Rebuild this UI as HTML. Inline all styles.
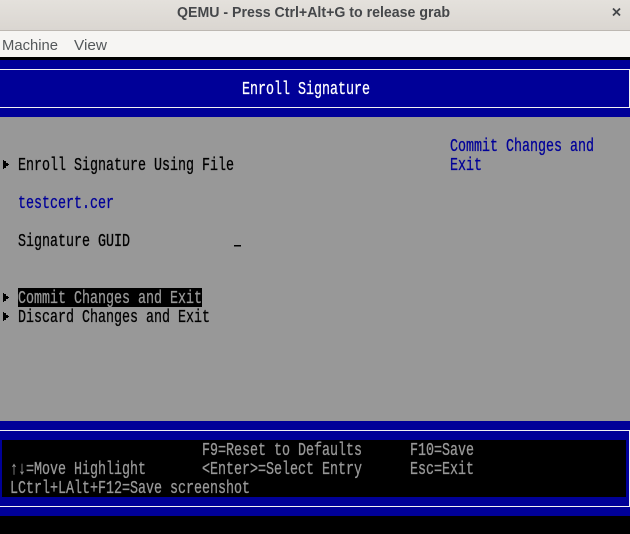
<!DOCTYPE html>
<html>
<head>
<meta charset="utf-8">
<style>
html,body{margin:0;padding:0;background:#000;width:630px;height:534px;overflow:hidden}
svg{display:block}
.m{font-family:"Liberation Mono",monospace;font-size:18px;stroke-width:.3px;paint-order:stroke}
.t{font-family:"Liberation Sans",sans-serif;font-size:14.5px;font-weight:700;fill:#45474a}
.u{font-family:"Liberation Sans",sans-serif;font-size:14.5px;fill:#54585a}
</style>
</head>
<body>
<svg width="630" height="534" viewBox="0 0 630 534" xmlns="http://www.w3.org/2000/svg">
<defs>
<linearGradient id="g" x1="0" y1="0" x2="0" y2="1"><stop offset="0" stop-color="#e4e1dc"/><stop offset="1" stop-color="#dad6d1"/></linearGradient>
<path id="a" d="M3 0h1v1h2v2h2v1h1v1h-1v1h-2v2h-2v1h-1z"/>
</defs>
<rect width="630" height="534" fill="#000"/>
<rect width="630" height="30" fill="url(#g)"/>
<rect y="30" width="630" height="1" fill="#bdb8b2"/>
<rect y="31" width="630" height="26" fill="#f6f5f3"/>
<rect y="57" width="630" height="3" fill="#000"/>
<text class="t" x="177" y="17" textLength="273" lengthAdjust="spacingAndGlyphs">QEMU - Press Ctrl+Alt+G to release grab</text>
<path d="M613 8.500l7 7M620 8.500l-7 7" stroke="#45474a" stroke-width="1.800" fill="none"/>
<text class="u" x="2" y="50" textLength="56" lengthAdjust="spacingAndGlyphs">Machine</text>
<text class="u" x="74" y="50" textLength="33" lengthAdjust="spacingAndGlyphs">View</text>

<rect y="60" width="630" height="57" fill="#000098"/>
<path d="M0 69.500H629.500V107.500H0" fill="none" stroke="#f2f2f2" stroke-width="1"/>
<rect y="117" width="630" height="304" fill="#989898"/>
<rect y="421" width="630" height="95" fill="#000098"/>
<path d="M0 430.500H629.500V506.500H0" fill="none" stroke="#f2f2f2" stroke-width="1"/>
<rect x="2" y="440" width="624" height="57" fill="#000"/>

<g class="m" fill="#fff" stroke="#fff">
<text x="242" y="94" textLength="128" lengthAdjust="spacingAndGlyphs">Enroll Signature</text>
</g>
<g class="m" fill="#000098" stroke="#000098">
<text x="450" y="151" textLength="144" lengthAdjust="spacingAndGlyphs">Commit Changes and</text>
<text x="450" y="170" textLength="32" lengthAdjust="spacingAndGlyphs">Exit</text>
<text x="18" y="208" textLength="96" lengthAdjust="spacingAndGlyphs">testcert.cer</text>
</g>
<g fill="#000">
<use href="#a" x="0" y="160"/>
<use href="#a" x="0" y="293"/>
<use href="#a" x="0" y="312"/>
<rect x="234" y="245" width="7" height="1.500"/>
<rect x="18" y="288" width="184" height="19"/>
</g>
<g class="m" fill="#000" stroke="#000">
<text x="18" y="170" textLength="216" lengthAdjust="spacingAndGlyphs">Enroll Signature Using File</text>
<text x="18" y="246" textLength="112" lengthAdjust="spacingAndGlyphs">Signature GUID</text>
<text x="18" y="322" textLength="192" lengthAdjust="spacingAndGlyphs">Discard Changes and Exit</text>
</g>
<g class="m" fill="#989898" stroke="#989898">
<text x="18" y="303" textLength="184" lengthAdjust="spacingAndGlyphs">Commit Changes and Exit</text>
<text x="202" y="455" textLength="160" lengthAdjust="spacingAndGlyphs">F9=Reset to Defaults</text>
<text x="410" y="455" textLength="64" lengthAdjust="spacingAndGlyphs">F10=Save</text>
<text x="10" y="474" textLength="136" lengthAdjust="spacingAndGlyphs">↑↓=Move Highlight</text>
<text x="202" y="474" textLength="160" lengthAdjust="spacingAndGlyphs">&lt;Enter&gt;=Select Entry</text>
<text x="410" y="474" textLength="64" lengthAdjust="spacingAndGlyphs">Esc=Exit</text>
<text x="10" y="493" textLength="240" lengthAdjust="spacingAndGlyphs">LCtrl+LAlt+F12=Save screenshot</text>
</g>
</svg>
</body>
</html>
